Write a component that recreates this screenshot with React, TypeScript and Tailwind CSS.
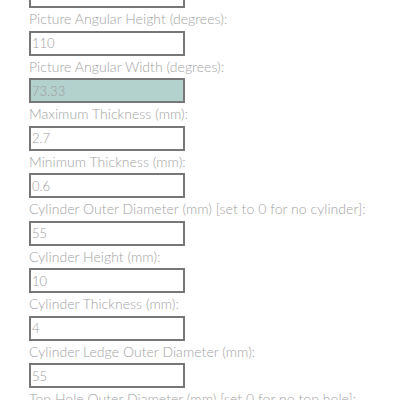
import React from 'react';

const fields: { label: string; value: string; computed?: boolean }[] = [
    { label: '', value: '' },
    { label: 'Picture Angular Height (degrees):', value: '110' },
    { label: 'Picture Angular Width (degrees):', value: '73.33', computed: true },
    { label: 'Maximum Thickness (mm):', value: '2.7' },
    { label: 'Minimum Thickness (mm):', value: '0.6' },
    { label: 'Cylinder Outer Diameter (mm) [set to 0 for no cylinder]:', value: '55' },
    { label: 'Cylinder Height (mm):', value: '10' },
    { label: 'Cylinder Thickness (mm):', value: '4' },
    { label: 'Cylinder Ledge Outer Diameter (mm):', value: '55' },
    { label: 'Top Hole Outer Diameter (mm) [set 0 for no top hole]:', value: '' },
];

export default function App() {
    return (
        <div className="w-[400px] h-[400px] overflow-hidden bg-white" style={{ fontFamily: 'Lato, "Open Sans", sans-serif' }}>
            <div className="mt-[-17px] pl-[29px] flex flex-col">
                {fields.map((f, i) => (
                    <div key={i} className="flex flex-col">
                        {i > 0 && (
                            <label className="block text-[14px] leading-[22.5px] font-light text-[#a3a3a3] tracking-[0.05px] whitespace-nowrap">
                                {f.label}
                            </label>
                        )}
                        <input
                            type="text"
                            readOnly
                            value={f.value}
                            className={
                                'w-[156px] h-[25px] border-2 border-[#777777] px-[1px] text-[13px] font-light text-[#9c9c9c] outline-none ' +
                                (f.computed ? 'bg-[#b3d1cd]' : 'bg-white')
                            }
                        />
                    </div>
                ))}
            </div>
        </div>
    );
}
